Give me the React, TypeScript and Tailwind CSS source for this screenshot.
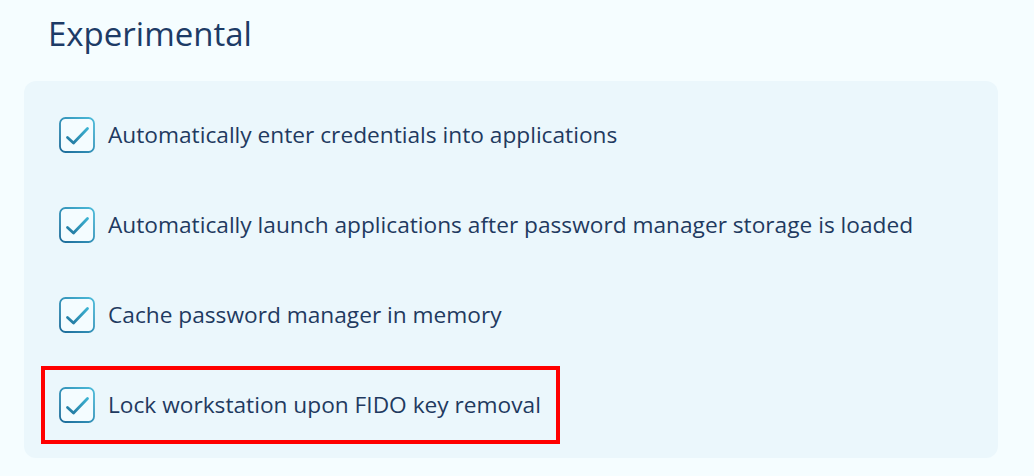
const items = [
	'Automatically enter credentials into applications',
	'Automatically launch applications after password manager storage is loaded',
	'Cache password manager in memory',
	'Lock workstation upon FIDO key removal',
]

function Checkbox({ id }: { id: number }) {
	return (
		<svg width="36" height="36" viewBox="0 0 36 36" className="shrink-0">
			<defs>
				<linearGradient id={`cb-border-${id}`} x1="1" y1="0" x2="0" y2="1">
					<stop offset="0" stopColor="#4cbbd9" />
					<stop offset="1" stopColor="#1c6a98" />
				</linearGradient>
				<linearGradient id={`cb-check-${id}`} x1="0" y1="1" x2="1" y2="0">
					<stop offset="0" stopColor="#23779f" />
					<stop offset="1" stopColor="#3bb2d2" />
				</linearGradient>
			</defs>
			<rect x="1" y="1" width="34" height="34" rx="5.5" fill="#f4fcff" stroke={`url(#cb-border-${id})`} strokeWidth="1.8" />
			<path
				d="M8.5 20.5 L14.5 26 L28.5 11.5"
				fill="none"
				stroke={`url(#cb-check-${id})`}
				strokeWidth="2.8"
				strokeLinecap="round"
				strokeLinejoin="round"
			/>
		</svg>
	)
}

export default function App() {
	return (
		<div
			className="h-[476px] w-[1034px] bg-[#f5fdff] pl-[24px] pr-[36px] pt-[12px]"
			style={{ fontFamily: '"Open Sans", sans-serif' }}
		>
			<h1 className="pl-[24px] text-[33px] leading-[44px] text-[#1d3b66]">Experimental</h1>
			<div className="mt-[25px] h-[377px] rounded-[12px] bg-[#ebf7fc] px-[17px] pt-[15px]">
				{items.map((label, i) => {
					const last = i === items.length - 1
					return (
						<div
							key={label}
							className={
								last
									? 'flex h-[78px] w-[519px] items-center gap-[13px] border-4 border-[#ff0000] pl-[14px]'
									: 'flex h-[90px] items-center gap-[13px] pb-[12px] pl-[18px]'
							}
						>
							<Checkbox id={i} />
							<span className="text-[22.7px] text-[#1f3a60]">{label}</span>
						</div>
					)
				})}
			</div>
		</div>
	)
}
